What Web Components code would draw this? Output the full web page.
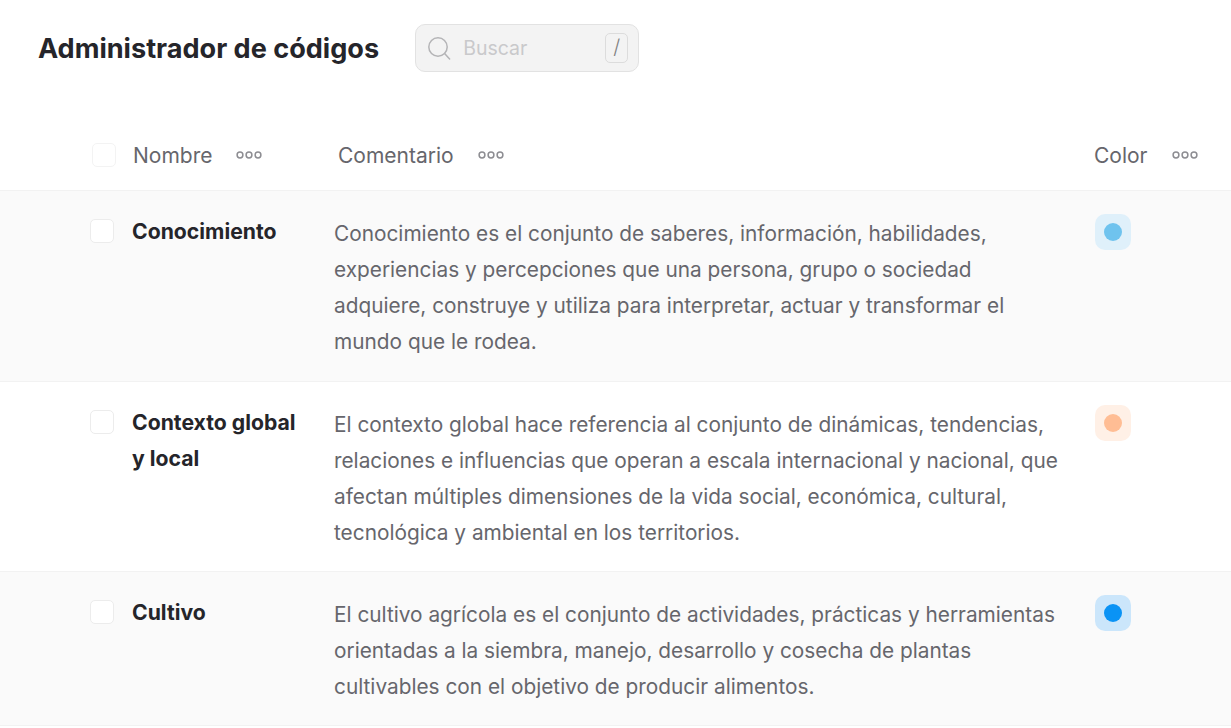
<!DOCTYPE html>
<html lang="es">
<head>
<meta charset="utf-8">
<title>Administrador de códigos</title>
<style>
html, body { margin: 0; padding: 0; background: #fff; }
body { font-family: Inter, Roboto, "Liberation Sans", sans-serif; width: 1231px; height: 728px; overflow: hidden; }
</style>
</head>
<body>
<code-manager>
  <span slot="title">Administrador de códigos</span>
  <code-row shaded name="Conocimiento" dot="#6fc3ee" halo="#dff0fa" style="--row-h:191px">Conocimiento es el conjunto de saberes, información, habilidades,<br>experiencias y percepciones que una persona, grupo o sociedad<br>adquiere, construye y utiliza para interpretar, actuar y transformar el<br>mundo que le rodea.</code-row>
  <code-row name="Contexto global y local" dot="#ffbd94" halo="#fff0e6" style="--row-h:190px">El contexto global hace referencia al conjunto de dinámicas, tendencias,<br>relaciones e influencias que operan a escala internacional y nacional, que<br>afectan múltiples dimensiones de la vida social, económica, cultural,<br>tecnológica y ambiental en los territorios.</code-row>
  <code-row shaded name="Cultivo" dot="#0a93f5" halo="#cbe6fb" style="--row-h:155px">El cultivo agrícola es el conjunto de actividades, prácticas y herramientas<br>orientadas a la siembra, manejo, desarrollo y cosecha de plantas<br>cultivables con el objetivo de producir alimentos.</code-row>
</code-manager>

<script>
const DOTS = '<svg width="26" height="8" viewBox="0 0 26 8" fill="none" stroke="#8d8d92" stroke-width="1.5"><circle cx="4" cy="4" r="2.9"/><circle cx="13" cy="4" r="2.9"/><circle cx="22" cy="4" r="2.9"/></svg>';

class SearchBox extends HTMLElement {
    connectedCallback() {
        this.attachShadow({mode: 'open'}).innerHTML = `
            <style>
                :host { display: flex; align-items: center; box-sizing: border-box; width: 224px; height: 48px; padding: 0 10px 0 11px;
                    background: #f3f3f3; border: 1.5px solid #e2e2e2; border-radius: 10px; }
                svg { flex: none; margin-right: 12px; }
                .ph { flex: 1; font-size: 19.5px; color: #c9c9cb; }
                .key { box-sizing: border-box; width: 23px; height: 30px; border: 1.5px solid #dcdcdc; border-radius: 5px;
                    font-size: 20px; font-weight: 300; line-height: 27px; text-align: center; color: #808080; }
            </style>
            <svg width="24" height="24" viewBox="0 0 24 24" fill="none" stroke="#b4b4b6" stroke-width="1.5" stroke-linecap="round"><circle cx="11" cy="11" r="9.2"/><path d="M17.6 17.6L22.6 23"/></svg>
            <span class="ph">Buscar</span>
            <span class="key">/</span>`;
    }
}

class CodeCheck extends HTMLElement {
    connectedCallback() {
        this.attachShadow({mode: 'open'}).innerHTML = `
            <style>
                :host { display: block; box-sizing: border-box; flex: none; width: 24px; height: 24px; background: #fff;
                    border: 1.5px solid #ececec; border-radius: 5px; }
            </style>`;
    }
}

class HeadCell extends HTMLElement {
    connectedCallback() {
        this.attachShadow({mode: 'open'}).innerHTML = `
            <style>
                :host { display: flex; align-items: center; gap: 24px; font-size: 21px; color: #66666c; }
            </style>
            <slot></slot>${DOTS}`;
    }
}

class CodeManager extends HTMLElement {
    connectedCallback() {
        this.attachShadow({mode: 'open'}).innerHTML = `
            <style>
                :host { display: block; }
                header { display: flex; align-items: center; gap: 36px; height: 95px; padding-left: 38px; }
                h1 { margin: 0; padding-top: 2px; font-size: 27.1px; font-weight: 700; color: #25252a; }
                .cols { display: grid; grid-template-columns: 206px 796px 1fr; align-items: center; height: 95px; padding: 25px 0 0 92px; box-sizing: border-box; }
                .first { display: flex; align-items: center; gap: 17px; }
                .first code-check { opacity: .6; }
                .comment { padding-left: 40px; }
            </style>
            <header><h1><slot name="title"></slot></h1><search-box></search-box></header>
            <div class="cols">
                <div class="first"><code-check></code-check><head-cell>Nombre</head-cell></div>
                <div class="comment"><head-cell>Comentario</head-cell></div>
                <head-cell>Color</head-cell>
            </div>
            <slot></slot>`;
    }
}

class CodeRow extends HTMLElement {
    connectedCallback() {
        const name = this.getAttribute('name');
        const root = this.attachShadow({mode: 'open'});
        root.innerHTML = `
            <style>
                :host { display: grid; grid-template-columns: 42px 202px 761px 1fr; box-sizing: border-box; height: var(--row-h);
                    padding: 23px 0 0 90px; border-top: 1px solid #f2f2f2; background: #fff; }
                :host([shaded]) { background: #fafafa; }
                :host(:last-child) { border-bottom: 1px solid #f2f2f2; }
                code-check { margin-top: 5px; }
                .name { font-size: 21.2px; line-height: 36px; font-weight: 700; color: #25252a; width: 170px; margin-top: -1px; }
                .text { font-size: 20.82px; line-height: 36px; color: #66666c; margin-top: 2px; white-space: nowrap; }
                .swatch { display: flex; align-items: center; justify-content: center; width: 36px; height: 36px; border-radius: 10px; background: var(--halo); }
                .swatch i { width: 18px; height: 18px; border-radius: 50%; background: var(--dot); }
            </style>
            <code-check></code-check>
            <div class="name"></div>
            <div class="text"><slot></slot></div>
            <div class="swatch" style="--halo:${this.getAttribute('halo')};--dot:${this.getAttribute('dot')}"><i></i></div>`;
        root.querySelector('.name').textContent = name;
    }
}

customElements.define('search-box', SearchBox);
customElements.define('code-check', CodeCheck);
customElements.define('head-cell', HeadCell);
customElements.define('code-manager', CodeManager);
customElements.define('code-row', CodeRow);
</script>
</body>
</html>
